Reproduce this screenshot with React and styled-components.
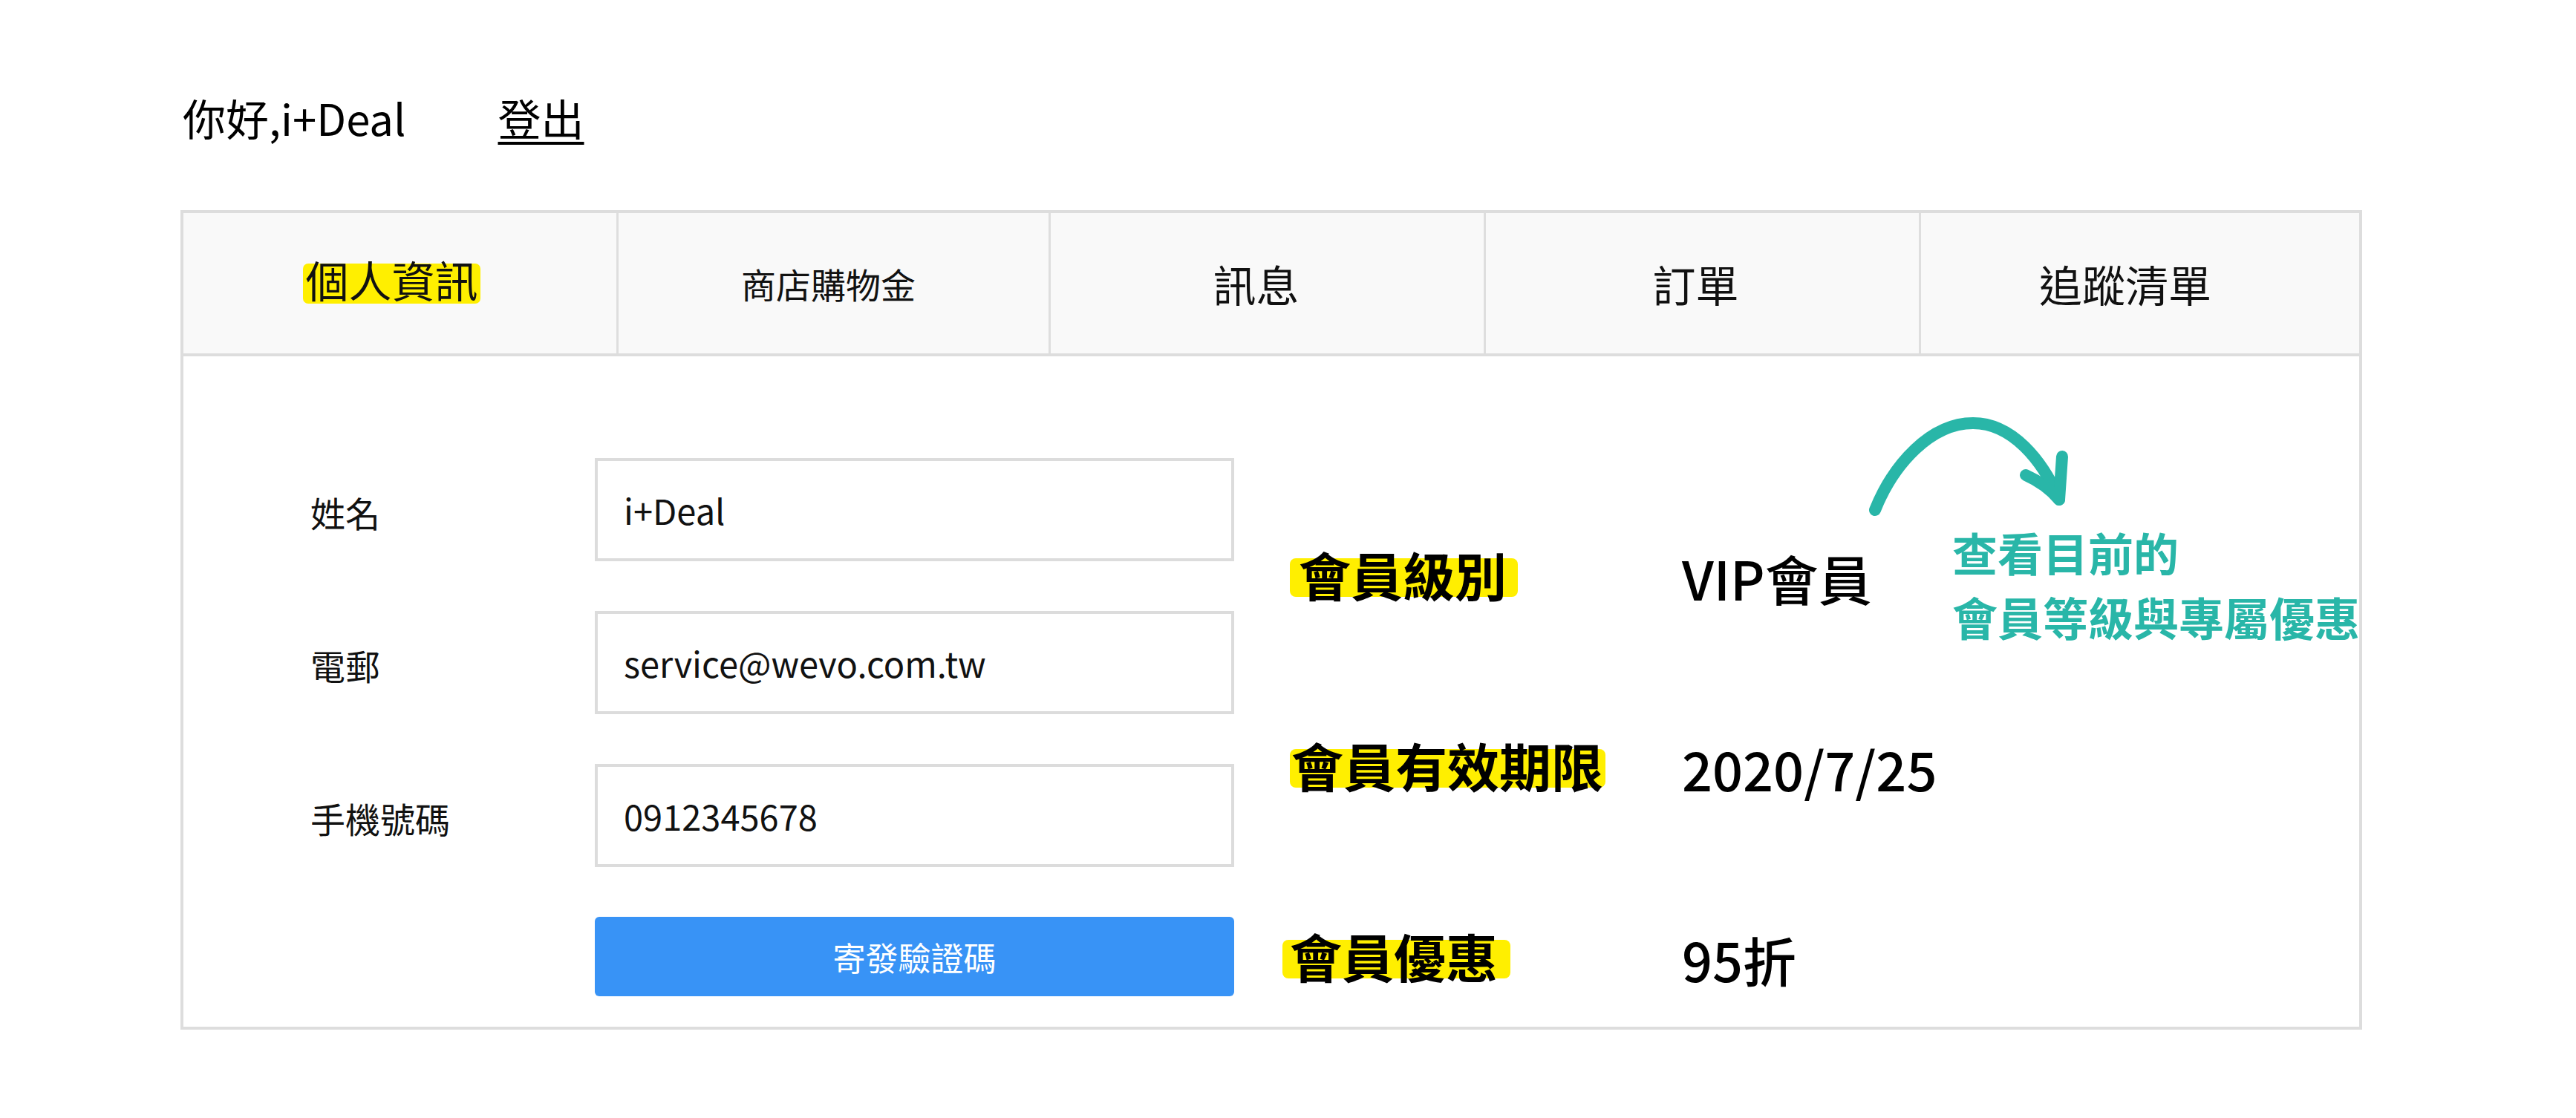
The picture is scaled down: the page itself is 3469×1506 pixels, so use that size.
import React from "react";
import styled, { createGlobalStyle } from "styled-components";

const GlobalStyle = createGlobalStyle`
  html, body { margin: 0; padding: 0; background: #ffffff; }
  body {
    font-family: "Noto Sans CJK TC", "Noto Sans", sans-serif;
    color: #000;
  }
  * { box-sizing: border-box; }
`;

const Page = styled.div`
  width: 3469px;
  min-height: 1506px;
  padding: 116px 0 0 243px;
`;

const Header = styled.div`
  display: flex;
  align-items: center;
  gap: 124px;
  padding-left: 3px;
  font-size: 58px;
  color: #000;
`;

const Greeting = styled.span``;

const Logout = styled.a`
  color: #000;
  text-decoration: underline;
  text-decoration-thickness: 4px;
  text-underline-offset: 8px;
  cursor: pointer;
`;

const Panel = styled.div`
  margin-top: 83px;
  width: 2938px;
  border: 4px solid #dddddd;
`;

const Tabs = styled.div`
  display: grid;
  grid-template-columns: 583px 582px 586px 586px 1fr;
  height: 193px;
  background: #f9f9f9;
  border-bottom: 4px solid #dddddd;
`;

const Tab = styled.div`
  display: flex;
  align-items: center;
  justify-content: center;
  padding-right: ${(p) => p.$shift || 24}px;
  font-size: ${(p) => (p.$small ? "47px" : "58px")};
  color: #111;
  & + & { border-left: 3px solid #dedede; }
`;

const TabMark = styled.span`
  display: inline-block;
  background: #ffef00;
  border-radius: 7px;
  padding: 0 3px 12px;
  height: 54px;
  line-height: 42px;
`;

const Body = styled.div`
  display: flex;
  align-items: flex-start;
  padding: 137px 0 41px 171px;
`;

const Form = styled.div`
  display: grid;
  grid-template-columns: 383px 861px;
  row-gap: 67px;
  align-items: center;
`;

const Label = styled.div`
  font-size: 47px;
  color: #111;
  padding-top: 6px;
`;

const Field = styled.div`
  height: 139px;
  border: 4px solid #dcdcdc;
  display: flex;
  align-items: center;
  padding-left: 35px;
  font-size: 47px;
  color: #111;
  background: #fff;
`;

const SendButton = styled.button`
  grid-column: 2;
  height: 107px;
  border: none;
  border-radius: 6px;
  background: #3893f6;
  color: #fff;
  font-family: inherit;
  font-size: 44px;
  cursor: pointer;
`;

const Member = styled.div`
  position: relative;
  margin-left: 75px;
  padding-top: 108px;
  display: flex;
  flex-direction: column;
  gap: 157px;
`;

const MemberRow = styled.div`
  display: grid;
  grid-template-columns: 528px auto;
  align-items: center;
  height: 100px;
`;

const MemberMark = styled.span`
  justify-self: start;
  display: inline-block;
  background: #ffef00;
  border-radius: 8px;
  height: 52px;
  line-height: 44px;
  padding: 0 ${(p) => p.$padR}px 8px ${(p) => p.$padL}px;
  margin-left: ${(p) => p.$nudge || 0}px;
  font-size: 70px;
  font-weight: 700;
  color: #000;
  white-space: nowrap;
`;

const Value = styled.span`
  font-size: 72px;
  font-weight: 500;
  color: #000;
  white-space: nowrap;
`;

const Callout = styled.div`
  position: absolute;
  left: 768px;
  top: -67px;
  display: flex;
  flex-direction: column;
`;

const CalloutText = styled.div`
  margin-left: 124px;
  margin-top: 0;
  font-size: 61px;
  font-weight: 700;
  line-height: 87px;
  color: #29b6a8;
  white-space: nowrap;
`;

const Arrow = () => (
  <svg width="290" height="150" viewBox="0 0 290 150" fill="none">
    <g stroke="#29b6a8" strokeWidth="16" strokeLinecap="round" strokeLinejoin="round">
      <path d="M20 137 C 45 75, 95 20, 152 20 C 205 20, 245 70, 268 122" />
      <path d="M272 65 L 268 123" />
      <path d="M223 90 Q 250 102 268 123" />
    </g>
  </svg>
);

const members = [
  { label: "會員級別", value: "VIP會員", padL: 12, padR: 15, nudge: 0 },
  { label: "會員有效期限", value: "2020/7/25", padL: 2, padR: 3, nudge: 0 },
  { label: "會員優惠", value: "95折", padL: 10, padR: 17, nudge: -10 },
];

export default function App() {
  return (
    <>
      <GlobalStyle />
      <Page>
        <Header>
          <Greeting>你好,i+Deal</Greeting>
          <Logout>登出</Logout>
        </Header>
        <Panel>
          <Tabs>
            <Tab $shift={22}>
              <TabMark>個人資訊</TabMark>
            </Tab>
            <Tab $small $shift={14}>商店購物金</Tab>
            <Tab $shift={30}>訊息</Tab>
            <Tab $shift={18}>訂單</Tab>
            <Tab $shift={40}>追蹤清單</Tab>
          </Tabs>
          <Body>
            <Form>
              <Label>姓名</Label>
              <Field>i+Deal</Field>
              <Label>電郵</Label>
              <Field>service@wevo.com.tw</Field>
              <Label>手機號碼</Label>
              <Field>0912345678</Field>
              <SendButton>寄發驗證碼</SendButton>
            </Form>
            <Member>
              {members.map((m) => (
                <MemberRow key={m.label}>
                  <MemberMark $padL={m.padL} $padR={m.padR} $nudge={m.nudge}>
                    {m.label}
                  </MemberMark>
                  <Value>{m.value}</Value>
                </MemberRow>
              ))}
              <Callout>
                <Arrow />
                <CalloutText>
                  查看目前的
                  <br />
                  會員等級與專屬優惠
                </CalloutText>
              </Callout>
            </Member>
          </Body>
        </Panel>
      </Page>
    </>
  );
}
